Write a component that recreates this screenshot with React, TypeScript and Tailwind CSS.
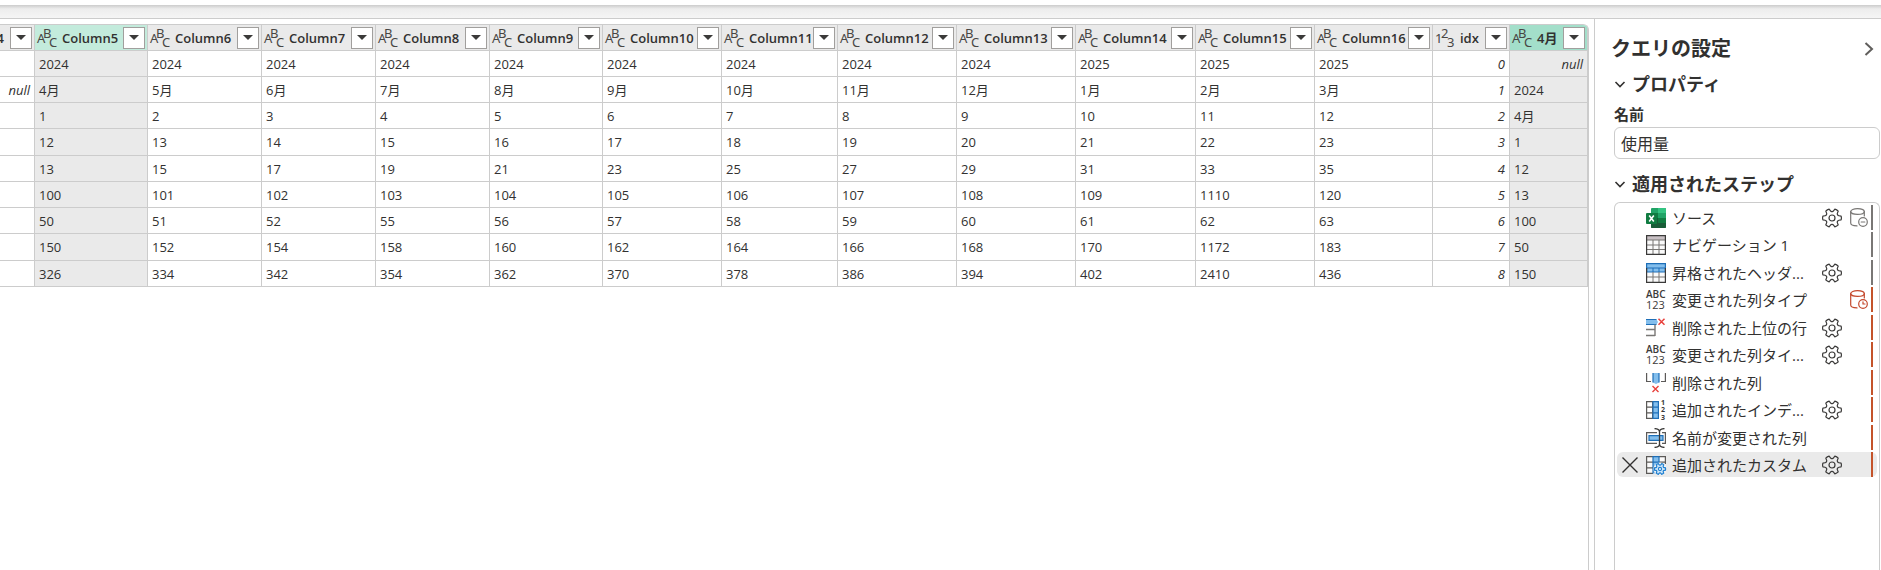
import type { ReactNode } from "react";

interface Column {
  name: string;
  type?: "text" | "number";
  width: string;
  selected?: boolean;
  active?: boolean;
}

const columns: Column[] = [
  { name: "4", width: "w-[35px]" },
  { name: "Column5", type: "text", width: "w-[113px]", selected: true },
  { name: "Column6", type: "text", width: "w-[114px]" },
  { name: "Column7", type: "text", width: "w-[114px]" },
  { name: "Column8", type: "text", width: "w-[114px]" },
  { name: "Column9", type: "text", width: "w-[113px]" },
  { name: "Column10", type: "text", width: "w-[119px]" },
  { name: "Column11", type: "text", width: "w-[116px]" },
  { name: "Column12", type: "text", width: "w-[119px]" },
  { name: "Column13", type: "text", width: "w-[119px]" },
  { name: "Column14", type: "text", width: "w-[120px]" },
  { name: "Column15", type: "text", width: "w-[119px]" },
  { name: "Column16", type: "text", width: "w-[118px]" },
  { name: "idx", type: "number", width: "w-[77px]" },
  { name: "4月", type: "text", width: "w-[78px]", selected: true, active: true },
];

const rows: (string | number | null)[][] = [
  ["", "2024", "2024", "2024", "2024", "2024", "2024", "2024", "2024", "2024", "2025", "2025", "2025", 0, null],
  [null, "4月", "5月", "6月", "7月", "8月", "9月", "10月", "11月", "12月", "1月", "2月", "3月", 1, "2024"],
  ["", "1", "2", "3", "4", "5", "6", "7", "8", "9", "10", "11", "12", 2, "4月"],
  ["", "12", "13", "14", "15", "16", "17", "18", "19", "20", "21", "22", "23", 3, "1"],
  ["", "13", "15", "17", "19", "21", "23", "25", "27", "29", "31", "33", "35", 4, "12"],
  ["", "100", "101", "102", "103", "104", "105", "106", "107", "108", "109", "1110", "120", 5, "13"],
  ["", "50", "51", "52", "55", "56", "57", "58", "59", "60", "61", "62", "63", 6, "100"],
  ["", "150", "152", "154", "158", "160", "162", "164", "166", "168", "170", "1172", "183", 7, "50"],
  ["", "326", "334", "342", "354", "362", "370", "378", "386", "394", "402", "2410", "436", 8, "150"],
];

/* Column type icons */
function TypeIcon({ type }: { type: "text" | "number" }) {
  const [a, b, c] = type === "text" ? ["A", "B", "C"] : ["1", "2", "3"];
  return (
    <svg
      viewBox="0 0 20 22"
      className="w-5 h-[22px] flex-shrink-0 fill-[#484644] font-normal font-['Noto_Sans',sans-serif] overflow-visible"
      fontSize="13"
      aria-hidden="true"
    >
      <text x="0" y="16">{a}</text>
      <text x="6" y="11">{b}</text>
      <text x="12" y="20">{c}</text>
    </svg>
  );
}

/* Step icons */
function ExcelIcon() {
  return (
    <svg viewBox="0 0 20 20" className="w-5 h-5">
      <rect x="5" y="0" width="15" height="20" rx="1" fill="#21a366" />
      <path d="M12 0h7a1 1 0 0 1 1 1v4h-8z" fill="#33c481" />
      <path d="M5 5h7v5H5z" fill="#107c41" />
      <path d="M5 10h7v5H5z" fill="#185c37" />
      <path d="M12 10h8v5h-8z" fill="#107c41" />
      <path d="M5 15h15v4a1 1 0 0 1-1 1H6a1 1 0 0 1-1-1z" fill="#185c37" />
      <rect x="0" y="5" width="11" height="11" rx="1" fill="#107c41" />
      <path d="M3.2 7.5l4.6 6M7.8 7.5l-4.6 6" stroke="#fff" strokeWidth="1.6" fill="none" />
    </svg>
  );
}

function TableIcon() {
  return (
    <svg viewBox="0 0 20 20" className="w-5 h-5" fill="none">
      <path d="M.5.5h19v19H.5z" fill="#fafafa" />
      <path d="M1 1h18v4H1z" fill="#c8c0c4" />
      <path d="M1 10h18M1 14.5h18M7 5v14M13 5v14M1 5h18" stroke="#797775" />
      <path d="M.6.6h18.8v18.8H.6z" stroke="#3b3a39" strokeWidth="1.2" />
    </svg>
  );
}

function PromotedIcon() {
  return (
    <svg viewBox="0 0 20 20" className="w-5 h-5" fill="none">
      <path d="M.5.5h19v19H.5z" fill="#fafafa" />
      <path d="M1 1h18v8H1z" fill="#83beec" />
      <path d="M7 5v4M13 5v4M1 9h18M1 5h18" stroke="#1e6fb8" />
      <path d="M1 14h18M7 9v10M13 9v10" stroke="#797775" />
      <path d="M.6 9V.6h18.8V9" stroke="#1e6fb8" strokeWidth="1.2" />
      <path d="M.6 5v14.4h18.8V5" stroke="#3b3a39" strokeWidth="1.2" />
    </svg>
  );
}

function AnyTypeIcon() {
  return (
    <svg viewBox="0 0 20 22" className="w-5 h-[22px] fill-[#3b3a39] overflow-visible">
      <text x="0" y="9" fontSize="10" fontWeight="600">ABC</text>
      <text x="0" y="20" fontSize="11">123</text>
    </svg>
  );
}

function RemoveRowsIcon() {
  return (
    <svg viewBox="0 0 20 20" className="w-5 h-5" fill="none">
      <path d="M0 1.5h10.5l1.5 2.5-1.5 2.5H0z" fill="#83beec" />
      <path d="M0 1.500h10.500M0 6.500h10.500" stroke="#1e6fb8" strokeWidth="1.2" />
      <path d="M0 11.5h9M0 17.5h9M9 6.500v11.600" stroke="#797775" strokeWidth="1.4" />
      <path d="M12.500.7l6 6M18.500.7l-6 6" stroke="#e8413c" strokeWidth="1.5" />
    </svg>
  );
}

function RemoveColumnsIcon() {
  return (
    <svg viewBox="0 0 20 20" className="w-5 h-5" fill="none">
      <path d="M.6 0v8.500H5M19.400 0v8.500H15" stroke="#5c5a58" strokeWidth="1.2" />
      <path d="M7 0v9.500l3 1.500 3-1.500V0z" fill="#83beec" />
      <path d="M7 0v9.500M13 0v9.500" stroke="#1e6fb8" strokeWidth="1.2" />
      <path d="M6.500 13l6 6M12.500 13l-6 6" stroke="#e8413c" strokeWidth="1.4" />
    </svg>
  );
}

function IndexIcon() {
  return (
    <svg viewBox="0 0 20 20" className="w-5 h-5 overflow-visible" fill="none">
      <path d="M.6 1.600h6v16.800h-6zM.6 7.200h6M.6 12.800h6" stroke="#5c5a58" strokeWidth="1.2" />
      <path d="M7 1.600h5.400v16.800H7z" fill="#83beec" />
      <path d="M7 1.600h5.400v16.800H7zM7 7.200h5.400M7 12.800h5.400" stroke="#1e6fb8" strokeWidth="1.2" />
      <g fill="#3b3a39" fontSize="7" fontWeight="700">
        <text x="15" y="5">1</text>
        <text x="15" y="12">2</text>
        <text x="15" y="20">3</text>
      </g>
    </svg>
  );
}

function RenameIcon() {
  return (
    <svg viewBox="0 0 20 20" className="w-5 h-5" fill="none">
      <path d="M11 4.600H.6v10.800H11M16 4.600h3.400v10.800H16" stroke="#5c5a58" strokeWidth="1.2" />
      <path d="M3 7.600h14v4.800H3z" fill="#83beec" stroke="#1e6fb8" strokeWidth="1.2" />
      <path
        d="M8.500.6c3 0 5 1 5 3.400v12c0 2.400-2 3.400-5 3.400M18.500.6c-3 0-5 1-5 3.400v12c0 2.400 2 3.400 5 3.400"
        stroke="#3b3a39"
        strokeWidth="1.3"
      />
    </svg>
  );
}

function polar(deg: number, r: number) {
  const rad = (deg * Math.PI) / 180;
  return `${(10 + r * Math.cos(rad)).toFixed(2)} ${(10 + r * Math.sin(rad)).toFixed(2)}`;
}

// Six-lobed gear outline around (10, 10)
const gearPath =
  [0, 60, 120, 180, 240, 300]
    .map(
      (a) =>
        `${a === 0 ? "M" : "L"}${polar(a - 12, 9.3)}Q${polar(a, 9.7)} ${polar(a + 12, 9.3)}L${polar(a + 18, 7.3)}Q${polar(a + 22, 6.4)} ${polar(a + 30, 6.5)}Q${polar(a + 38, 6.4)} ${polar(a + 42, 7.3)}`
    )
    .join("") + "Z";

function CustomColumnIcon() {
  return (
    <svg viewBox="0 0 20 20" className="w-5 h-5 overflow-visible" fill="none">
      <path d="M.6 1.600h18.800v16.800H.6z" fill="#fafafa" />
      <path d="M7 1.600h6v16.800H7z" fill="#83beec" />
      <path
        d="M7 18.400H.6V1.600H7M.6 7.200H7M.6 12.800H7M13 1.600h6.400V9M13 7.200h6"
        stroke="#5c5a58"
        strokeWidth="1.2"
      />
      <path d="M7 18.400V1.600h6V9M7 7.200h6" stroke="#1e6fb8" strokeWidth="1.2" />
      <circle cx="14" cy="14" r="6.500" fill="#f3f3f3" />
      <g transform="translate(8 8) scale(0.6)" stroke="#1e7fd0" strokeWidth="2">
        <path d={gearPath} fill="#cfe6f8" />
        <circle cx="10" cy="10" r="2.600" fill="#fff" />
      </g>
    </svg>
  );
}

function GearIcon() {
  return (
    <svg
      viewBox="0 0 20 20"
      className="w-5 h-5"
      fill="none"
      stroke="#3b3a39"
      strokeWidth="1.2"
      strokeLinejoin="round"
    >
      <path d={gearPath} />
      <circle cx="10" cy="10" r="3" />
    </svg>
  );
}

function DatabaseIcon({ kind }: { kind: "minus" | "clock" }) {
  return (
    <svg
      viewBox="0 0 18 19"
      className={kind === "clock" ? "w-[18px] h-[19px] stroke-[#c4492d]" : "w-[18px] h-[19px] stroke-[#797775]"}
      fill="none"
      strokeWidth="1.2"
      strokeLinecap="round"
    >
      <ellipse cx="7.500" cy="3.500" rx="6.800" ry="2.900" />
      <path d="M.7 3.500v11.500c0 1.600 2.800 2.800 6.300 2.900M14.300 3.500V8" />
      <circle cx="13" cy="14" r="4.300" />
      {kind === "minus" ? <path d="M11.200 14h3.600" /> : <path d="M13 11.800V14h2" />}
    </svg>
  );
}

interface Step {
  name: string;
  icon: ReactNode;
  settings?: boolean;
  source?: "minus" | "clock";
  folded?: boolean;
  selected?: boolean;
}

const steps: Step[] = [
  { name: "ソース", icon: <ExcelIcon />, settings: true, source: "minus", folded: true },
  { name: "ナビゲーション 1", icon: <TableIcon />, folded: true },
  { name: "昇格されたヘッダ...", icon: <PromotedIcon />, settings: true, folded: true },
  { name: "変更された列タイプ", icon: <AnyTypeIcon />, source: "clock" },
  { name: "削除された上位の行", icon: <RemoveRowsIcon />, settings: true },
  { name: "変更された列タイ...", icon: <AnyTypeIcon />, settings: true },
  { name: "削除された列", icon: <RemoveColumnsIcon /> },
  { name: "追加されたインデ...", icon: <IndexIcon />, settings: true },
  { name: "名前が変更された列", icon: <RenameIcon /> },
  { name: "追加されたカスタム", icon: <CustomColumnIcon />, settings: true, selected: true },
];

function HeaderCell({ column }: { column: Column }) {
  const bg = column.active ? "bg-[#a3dfca]" : column.selected ? "bg-[#c3ebdc]" : "bg-[#eaeaea]";
  return (
    <th className={`${column.width} ${bg} h-[26px] p-0 border-r border-b border-[#cccccc] font-semibold`}>
      <div className="flex items-center justify-end pl-[2px] pr-[2px]">
        {column.type && <TypeIcon type={column.type} />}
        <span className={column.type ? "flex-1 pl-[5px] text-left" : "flex-shrink-0 pr-[6px]"}>{column.name}</span>
        <button
          aria-label="フィルター"
          className="w-[22px] h-[22px] flex-shrink-0 flex items-center justify-center bg-white border border-[#a19f9d]"
        >
          <svg viewBox="0 0 10 5" className="w-[10px] h-[5px] fill-[#3b3a39]">
            <path d="M0 0h10L5 5z" />
          </svg>
        </button>
      </div>
    </th>
  );
}

function DataGrid() {
  return (
    <div className="flex-1 min-w-0 overflow-hidden pt-[5px] mr-[5px] flex">
      <div className="flex-1 min-w-0 overflow-hidden border-t border-r border-[#cccccc] rounded-tr-md">
        <table className="table-fixed w-[1588px] border-separate border-spacing-0 text-[13px] leading-5">
          <thead>
            <tr>
              {columns.map((column) => (
                <HeaderCell key={column.name} column={column} />
              ))}
            </tr>
          </thead>
          <tbody>
            {rows.map((row, r) => (
              <tr key={r} className="h-[26px] nth-[4n]:h-[27px]">
                {row.map((value, c) => (
                  <td
                    key={c}
                    className={`px-1 py-0 border-r border-b border-[#cccccc] ${
                      columns[c].selected ? "bg-[#eaeaea]" : "bg-white"
                    } ${value === null || typeof value === "number" ? "text-right italic" : ""}`}
                  >
                    {value === null ? "null" : value}
                  </td>
                ))}
              </tr>
            ))}
          </tbody>
        </table>
      </div>
    </div>
  );
}

function StepRow({ step }: { step: Step }) {
  return (
    <li
      className={`flex items-center h-[25px] odd:mb-[2px] even:mb-[3px] pr-1 rounded-md ${
        step.selected ? "bg-[#eaeaea]" : ""
      }`}
    >
      <div className="w-[29px] flex-shrink-0 pl-[5px]">
        {step.selected && (
          <button aria-label="削除" className="block">
            <svg viewBox="0 0 16 16" className="w-4 h-4 stroke-[#323130]" fill="none" strokeWidth="1.4">
              <path d="M.5.5l15 15M15.500.5l-15 15" />
            </svg>
          </button>
        )}
      </div>
      <div className="w-5 flex-shrink-0">{step.icon}</div>
      <span className="flex-1 min-w-0 pl-[6px] text-[15px] leading-5 whitespace-nowrap">{step.name}</span>
      <div className="w-5 h-5 flex-shrink-0">
        {step.settings && (
          <button aria-label="設定" className="block">
            <GearIcon />
          </button>
        )}
      </div>
      <div className="w-[18px] ml-2 mr-[3px] flex-shrink-0">{step.source && <DatabaseIcon kind={step.source} />}</div>
      <div className={`w-[2px] h-full flex-shrink-0 ${step.folded ? "bg-[#797775]" : "bg-[#c4532a]"}`} />
    </li>
  );
}

function SectionTitle({ children }: { children: ReactNode }) {
  return (
    <h3 className="text-[18px] leading-6 font-semibold">
      <button className="flex items-center gap-[6px]">
        <svg viewBox="0 0 12 12" className="w-3 h-3 stroke-current" fill="none" strokeWidth="1.6">
          <path d="M1.500 4l4.500 4.500L10.500 4" />
        </svg>
        {children}
      </button>
    </h3>
  );
}

function QuerySettings() {
  return (
    <aside className="w-[287px] flex-shrink-0 flex flex-col border-l border-[#cccccc] pt-4">
      <div className="flex items-center justify-between pl-4 pr-[7px]">
        <h2 className="text-[20px] leading-7 font-semibold">クエリの設定</h2>
        <button aria-label="折りたたむ">
          <svg viewBox="0 0 10 14" className="w-[10px] h-[14px] stroke-[#605e5c]" fill="none" strokeWidth="2">
            <path d="M1.500 1l6.500 6-6.500 6" />
          </svg>
        </button>
      </div>

      <div className="flex-1 flex flex-col pl-[19px] pr-px pt-[9px]">
        <SectionTitle>プロパティ</SectionTitle>
        <label htmlFor="query-name" className="mt-2 text-[15px] leading-5 font-semibold">
          名前
        </label>
        <input
          id="query-name"
          defaultValue="使用量"
          className="mt-[3px] h-8 w-full rounded-md border border-[#cccccc] px-[6px] text-[16px]"
        />

        <div className="mt-[13px]">
          <SectionTitle>適用されたステップ</SectionTitle>
        </div>
        <ul className="mt-[6px] flex-1 rounded-t-md border border-b-0 border-[#cccccc] p-[2px]">
          {steps.map((step) => (
            <StepRow key={step.name} step={step} />
          ))}
        </ul>
      </div>
    </aside>
  );
}

export default function App() {
  return (
    <div className="h-screen overflow-hidden flex flex-col bg-white text-[#323130] font-['Open_Sans','Noto_Sans_CJK_JP',sans-serif]">
      <div className="h-[5px] flex-shrink-0" />
      <div className="h-[14px] flex-shrink-0 border-b border-[#cccccc] bg-linear-to-b from-[#cccccc] via-[#ededed] via-30% to-[#f5f5f5]" />
      <main className="flex-1 min-h-0 flex">
        <DataGrid />
        <QuerySettings />
      </main>
    </div>
  );
}
